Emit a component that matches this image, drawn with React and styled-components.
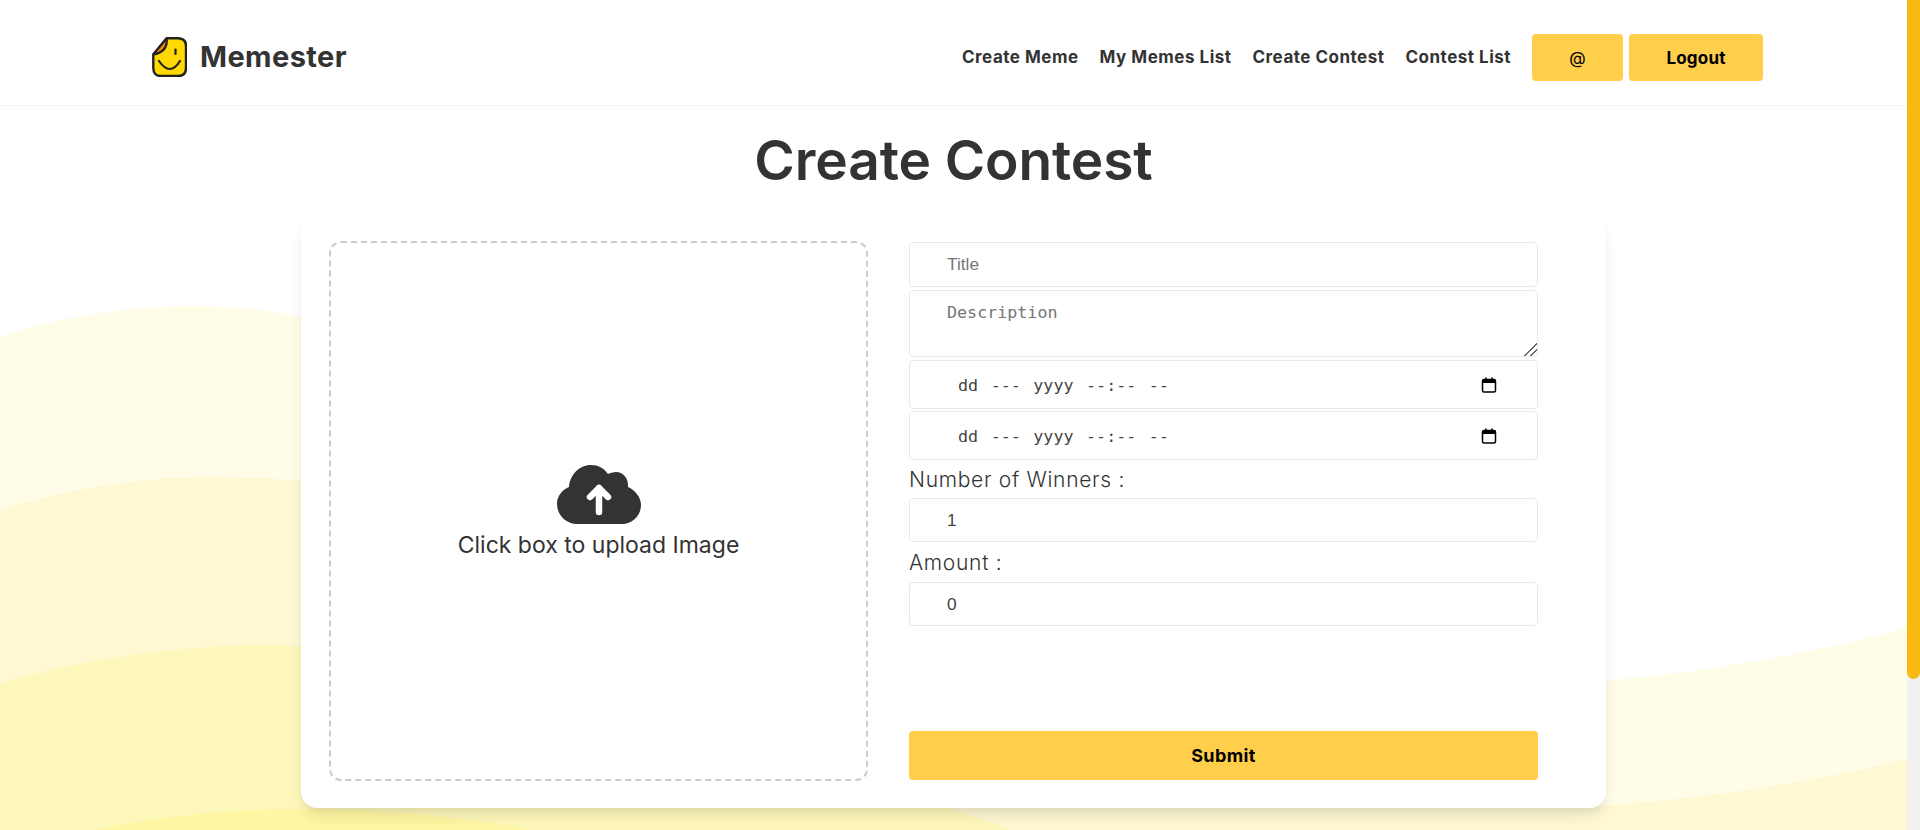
import React from 'react';
import styled, { createGlobalStyle } from 'styled-components';

const GlobalStyle = createGlobalStyle`
  html {
    overflow: hidden;
  }
  body {
    margin: 0;
    background: #fff;
    font-family: Inter, "Liberation Sans", sans-serif;
    color: #333;
  }
  * {
    box-sizing: border-box;
  }
`;

const Shell = styled.div`
  display: flex;
  height: 830px;
  overflow: hidden;
`;

const Page = styled.div`
  position: relative;
  flex: 1;
  min-width: 0;
`;

const ScrollTrack = styled.aside`
  flex: 0 0 13px;
  background: #f1f1f1;
`;

const ScrollThumb = styled.div`
  height: 679px;
  background: #f8ba10;
  border-radius: 0 0 7px 7px;
`;

const Waves = styled.svg`
  position: absolute;
  left: 0;
  top: 0;
  width: 100%;
  height: 830px;
`;

const Header = styled.header`
  position: relative;
  display: flex;
  align-items: center;
  justify-content: space-between;
  height: 106px;
  padding: 10px 144px 0 152px;
  background: #fff;
  border-bottom: 1px solid #f3f3f3;
`;

const Brand = styled.a`
  display: flex;
  align-items: center;
  gap: 13px;
  margin-top: -2px;
  font-size: 29px;
  letter-spacing: 0.4px;
  font-weight: 700;
  color: #333;
`;

const Nav = styled.nav`
  display: flex;
  align-items: center;
`;

const NavLink = styled.a`
  margin: -2px 21px 0 0;
  font-size: 17px;
  letter-spacing: 0.5px;
  font-weight: 700;
  color: #333;
  white-space: nowrap;
`;

const NavButton = styled.button`
  width: ${(p) => p.$width}px;
  height: 47px;
  margin-left: ${(p) => p.$gap || 0}px;
  border: 0;
  border-radius: 4px;
  background: #ffce4b;
  color: #000;
  font-family: inherit;
  font-size: 17px;
  letter-spacing: 0.2px;
  font-weight: ${(p) => p.$weight || 700};
`;

const Main = styled.main`
  position: relative;
  display: flex;
  flex-direction: column;
  align-items: center;
`;

const Title = styled.h1`
  margin: 0;
  height: 109px;
  font-size: 55px;
  letter-spacing: -0.1px;
  line-height: 108px;
  font-weight: 600;
  color: #333;
`;

const Card = styled.section`
  display: flex;
  gap: 41px;
  width: 1305px;
  height: 593px;
  padding: 26px 68px 27px 28px;
  background: #fff;
  border-radius: 16px;
  box-shadow: 0 10px 15px -3px rgba(0, 0, 0, 0.1), 0 4px 6px -2px rgba(0, 0, 0, 0.05);
`;

const Upload = styled.label`
  display: flex;
  flex-direction: column;
  align-items: center;
  justify-content: center;
  flex: 0 0 539px;
  padding-top: 4px;
  border: 2px dashed #ccc;
  border-radius: 12px;
  font-size: 23px;
  line-height: 34px;
  color: #333;
`;

const CloudSvg = styled.svg`
  display: block;
  margin-bottom: 4px;
`;

const Form = styled.form`
  display: flex;
  flex-direction: column;
  flex: 1;
  margin: 1px 0;
`;

const fieldBase = `
  display: block;
  width: 100%;
  border: 1px solid #e9e9e9;
  border-radius: 4px;
  background: #fff;
  outline: none;
`;

const Input = styled.input`
  ${fieldBase}
  height: ${(p) => p.$height || 44}px;
  margin-bottom: 3px;
  padding: 0 37px;
  font-family: "Liberation Sans", Arial, sans-serif;
  font-size: 17.3px;
  color: #444;
  &::placeholder {
    color: #757575;
  }
`;

const Textarea = styled.textarea`
  ${fieldBase}
  height: 67px;
  margin-bottom: 3px;
  padding: 11px 37px;
  font-family: "DejaVu Sans Mono", monospace;
  font-size: 16.7px;
  &::placeholder {
    color: #757575;
  }
  &::-webkit-resizer {
    background: linear-gradient(135deg, transparent 0 55%, #666 55% 62%, transparent 62% 74%, #666 74% 81%, transparent 81%);
  }
`;

const DateField = styled.div`
  ${fieldBase}
  display: flex;
  align-items: center;
  justify-content: space-between;
  height: 49px;
  margin-bottom: 2px;
  padding: 0 40px 0 48px;
  font-family: "DejaVu Sans Mono", monospace;
  font-size: 16.7px;
  word-spacing: 2.5px;
  color: #444;
`;

const Label = styled.label`
  display: block;
  height: ${(p) => p.$height || 36}px;
  font-size: 21px;
  letter-spacing: 0.7px;
  font-weight: 300;
  line-height: 36px;
  color: #333;
`;

const Submit = styled.button`
  width: 100%;
  height: 49px;
  margin-top: auto;
  border: 0;
  border-radius: 4px;
  background: #ffce4b;
  color: #000;
  font-family: inherit;
  font-size: 18px;
  letter-spacing: 0.4px;
  font-weight: 700;
`;

const Logo = () => (
  <svg width="35" height="40" viewBox="0 0 35 40">
    <path d="M14.7 1.2 H26 Q34 1.2 34 9 V31 Q34 39 26 39 H9 Q1.3 39 1.3 31 V17.5 Z" fill="#ffd900" stroke="#222" strokeWidth="2.4" strokeLinejoin="round" />
    <path d="M14.7 1.2 Q16 15 1.3 17.5 Z" fill="#f58a0a" stroke="#222" strokeWidth="2.2" strokeLinejoin="round" />
    <path d="M7 24 Q18 40 28 24" fill="none" stroke="#222" strokeWidth="2.2" strokeLinecap="round" />
    <path d="M23.5 12.5 V17" fill="none" stroke="#222" strokeWidth="2.2" strokeLinecap="round" />
  </svg>
);

const CloudUpload = () => (
  <CloudSvg width="84" height="59" viewBox="0 0 84 59">
    <path d="M20 59 C9 59 0 50 0 39 C0 31 5 25 12 22 C13 10 22 0 34 0 C41 0 47 3 51 9 C53 8 56 7 59 7 C66 7 71 13 71 20 V22 C78 25 84 32 84 40 C84 50 76 59 65 59 Z" fill="#333" />
    <path d="M42 47 V23 M33 32 L42 23 L51 32" fill="none" stroke="#fff" strokeWidth="6.5" strokeLinecap="round" strokeLinejoin="round" />
  </CloudSvg>
);

const CalendarIcon = () => (
  <svg width="16" height="16" viewBox="0 0 16 16">
    <path d="M5 0.5 V3 M11 0.5 V3" stroke="#000" strokeWidth="1.6" />
    <rect x="1.5" y="2.5" width="13" height="12.5" rx="1.5" fill="none" stroke="#000" strokeWidth="1.5" />
    <rect x="1.5" y="3" width="13" height="3" fill="#000" />
  </svg>
);

const navItems = ['Create Meme', 'My Memes List', 'Create Contest', 'Contest List'];

const App = () => {
  return (
    <Shell>
      <GlobalStyle />
      <Page>
        <Waves viewBox="0 0 1907 830" preserveAspectRatio="none">
          <path d="M0 336 C60 318 125 306 190 306 C230 306 265 310 300 316 C700 400 1000 700 1606 681 C1710 671 1810 654 1907 628 V830 H0 Z" fill="#fffce8" />
          <path d="M0 510 C65 490 135 477 210 477 C240 477 270 478 300 481 C700 520 1000 830 1606 806 C1710 796 1810 784 1907 759 V830 H0 Z" fill="#fef9d3" />
          <path d="M0 683 C90 658 180 645 270 645 L300 646 C600 660 800 720 950 808 L1012 830 H0 Z" fill="#fef7bb" />
          <path d="M94 830 C150 818 225 809 300 809 C380 809 460 816 531 830 Z" fill="#fff6a3" />
        </Waves>
        <Header>
          <Brand>
            <Logo />
            Memester
          </Brand>
          <Nav>
            {navItems.map((item) => (
              <NavLink key={item}>{item}</NavLink>
            ))}
            <NavButton $width={91} $weight={400}>@</NavButton>
            <NavButton $width={134} $gap={6}>Logout</NavButton>
          </Nav>
        </Header>
        <Main>
          <Title>Create Contest</Title>
          <Card>
            <Upload>
              <CloudUpload />
              Click box to upload Image
            </Upload>
            <Form>
              <Input $height={45} placeholder="Title" />
              <Textarea placeholder="Description" />
              <DateField>
                dd --- yyyy --:-- --
                <CalendarIcon />
              </DateField>
              <DateField>
                dd --- yyyy --:-- --
                <CalendarIcon />
              </DateField>
              <Label>Number of Winners :</Label>
              <Input defaultValue="1" />
              <Label $height={37}>Amount :</Label>
              <Input defaultValue="0" />
              <Submit type="button">Submit</Submit>
            </Form>
          </Card>
        </Main>
      </Page>
      <ScrollTrack>
        <ScrollThumb />
      </ScrollTrack>
    </Shell>
  );
};

export default App;
